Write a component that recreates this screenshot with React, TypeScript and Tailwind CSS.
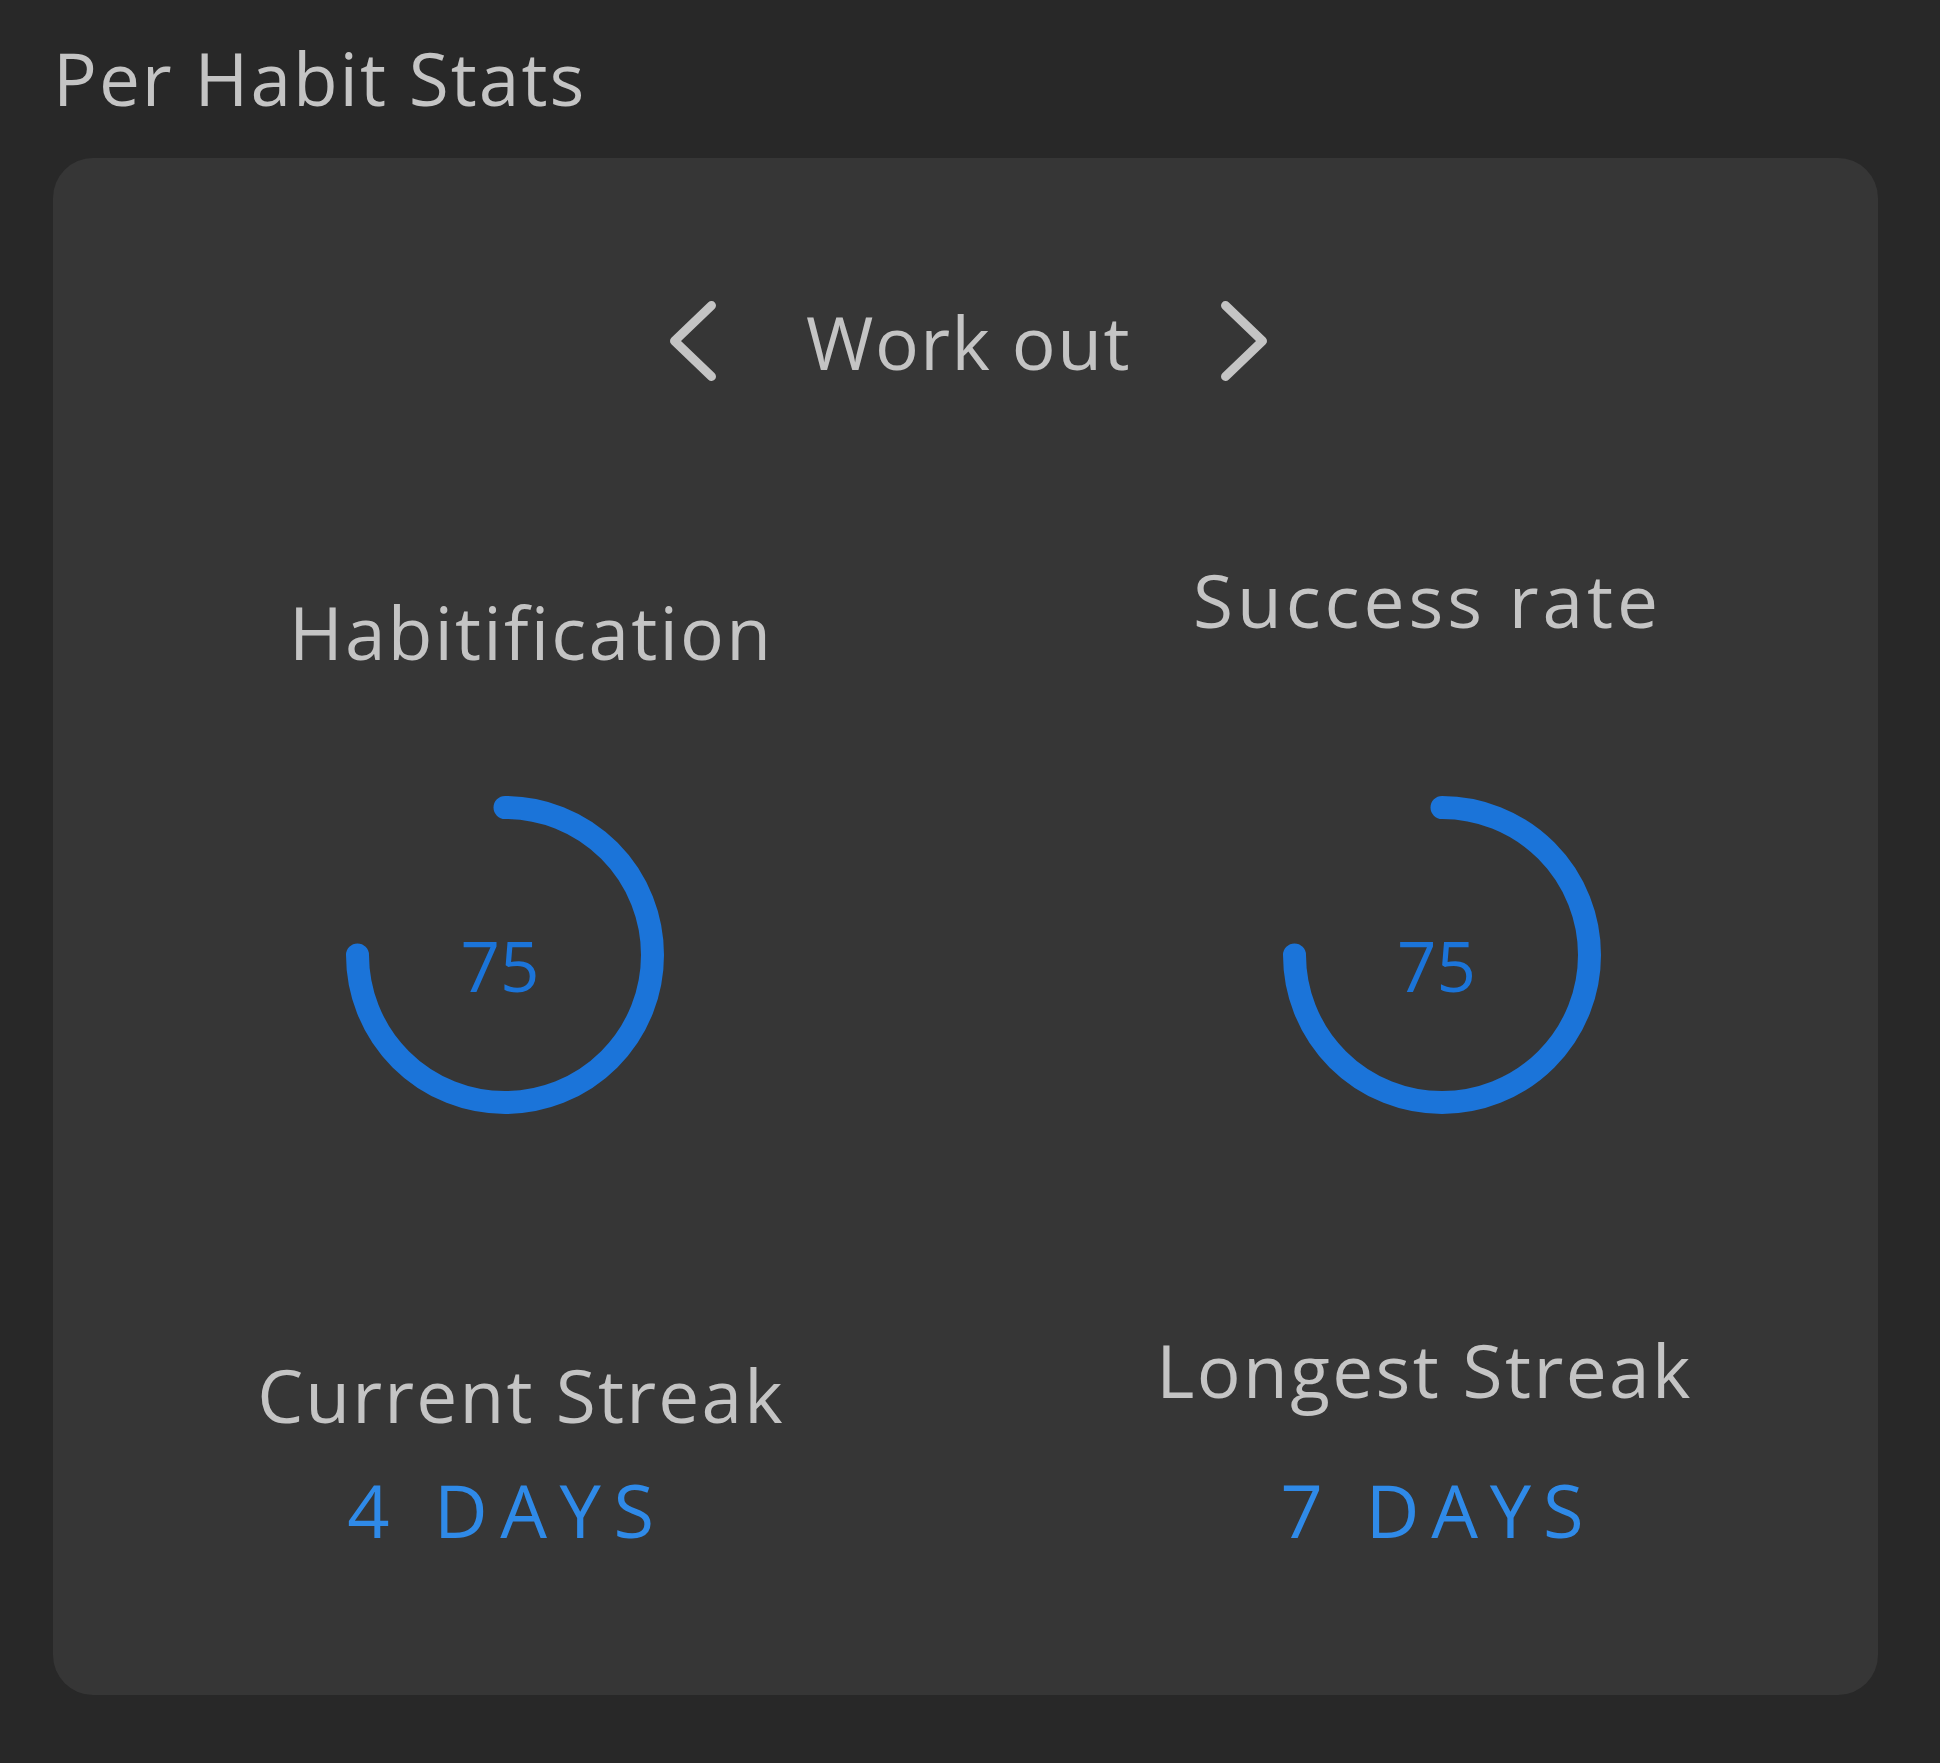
import React from "react";

const font = { fontFamily: '"Open Sans", "Liberation Sans", sans-serif' };

function Ring({ value }: { value: number }) {
  return (
    <div className="relative h-[320px] w-[320px]">
      <svg width="320" height="320" viewBox="0 0 320 320" className="block">
        <path
          d="M160 12.5 A147.5 147.5 0 1 1 12.5 160"
          fill="none"
          stroke="#1b74d9"
          strokeWidth="23"
          strokeLinecap="round"
        />
      </svg>
      <div className="absolute inset-0 flex items-center justify-center">
        <span className="mt-[20px] -ml-[10px] text-[69px] leading-none text-[#1b74d9]">{value}</span>
      </div>
    </div>
  );
}

function Chevron({ dir }: { dir: "left" | "right" }) {
  const pts = dir === "left" ? "41.5,4.5 4.5,40 41.5,75.5" : "4.5,4.5 41.5,40 4.5,75.5";
  return (
    <svg width="46" height="80" viewBox="0 0 46 80" className="block">
      <polyline
        points={pts}
        fill="none"
        stroke="#c4c4c4"
        strokeWidth="9"
        strokeLinecap="round"
        strokeLinejoin="round"
      />
    </svg>
  );
}

export default function App() {
  return (
    <div className="h-[1763px] w-[1940px] bg-[#282828] overflow-hidden" style={font}>
      <div className="pt-[41px] pl-[53px] text-[73px] leading-none tracking-[0.027em] text-[#c4c4c4]">
        Per Habit Stats
      </div>
      <div className="ml-[53px] mt-[44px] h-[1537px] w-[1825px] rounded-[40px] bg-[#363636] pt-[143px]">
        <div className="flex h-[80px] items-center justify-center pl-[6px]">
          <Chevron dir="left" />
          <div className="mx-[90px] text-[73px] leading-none tracking-[0.02em] text-[#c4c4c4]">Work out</div>
          <Chevron dir="right" />
        </div>
        <div className="grid grid-cols-[922px_903px]">
          <div className="flex flex-col items-center">
            <div className="mt-[214px] ml-[34px] text-[73px] leading-none tracking-[0.03em] text-[#c4c4c4]">
              Habitification
            </div>
            <div className="mt-[127px] -ml-[18px]">
              <Ring value={75} />
            </div>
            <div className="mt-[243px] ml-[14px] text-[73px] leading-none tracking-[0.03em] text-[#c4c4c4]">
              Current Streak
            </div>
            <div className="mt-[42px] -ml-[14px] text-[74px] leading-none tracking-[0.17em] text-[#2f8ae8]">
              4 DAYS
            </div>
          </div>
          <div className="flex flex-col items-center">
            <div className="mt-[182px] ml-[2px] text-[73px] leading-none tracking-[0.054em] text-[#c4c4c4]">
              Success rate
            </div>
            <div className="mt-[159px] ml-[30px]">
              <Ring value={75} />
            </div>
            <div className="mt-[218px] -ml-[4px] text-[73px] leading-none tracking-[0.033em] text-[#c4c4c4]">
              Longest Streak
            </div>
            <div className="mt-[67px] ml-[23px] text-[74px] leading-none tracking-[0.16em] text-[#2f8ae8]">
              7 DAYS
            </div>
          </div>
        </div>
      </div>
    </div>
  );
}
